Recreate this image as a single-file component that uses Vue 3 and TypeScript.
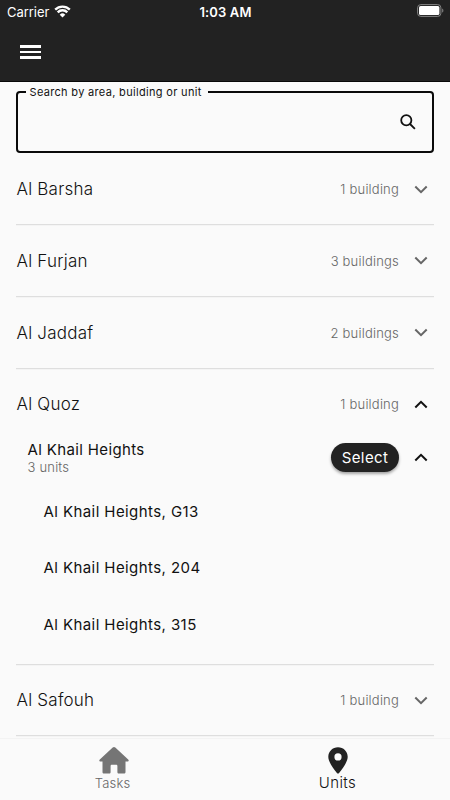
<script setup lang="ts">
interface Building {
  name: string
  summary: string
  units: string[]
}

interface Area {
  name: string
  count: string
  building?: Building
}

const areas: Area[] = [
  { name: 'Al Barsha', count: '1 building' },
  { name: 'Al Furjan', count: '3 buildings' },
  { name: 'Al Jaddaf', count: '2 buildings' },
  {
    name: 'Al Quoz',
    count: '1 building',
    building: {
      name: 'Al Khail Heights',
      summary: '3 units',
      units: ['Al Khail Heights, G13', 'Al Khail Heights, 204', 'Al Khail Heights, 315'],
    },
  },
  { name: 'Al Safouh', count: '1 building' },
]
</script>

<template>
  <div class="screen">
    <header class="top">
      <div class="status">
        <div class="carrier">
          <span>Carrier</span>
          <svg class="wifi" width="17" height="13" viewBox="0 0 17 13">
            <path d="M1.2 4.6a10.4 10.4 0 0 1 14.6 0" />
            <path d="M3.7 7.3a6.8 6.8 0 0 1 9.6 0" />
            <path class="dot" d="M8.5 12.5 5.7 9.7a4 4 0 0 1 5.6 0z" />
          </svg>
        </div>
        <span class="time">1:03 AM</span>
        <svg class="battery" width="27" height="13" viewBox="0 0 27 13">
          <rect class="shell" x=".6" y=".6" width="23.3" height="11.8" rx="3.2" />
          <rect class="charge" x="2" y="2" width="20.4" height="9" rx="1.6" />
          <path class="nub" d="M25.2 4.4c1.6.6 1.6 3.6 0 4.2z" />
        </svg>
      </div>
      <button class="menu" aria-label="Menu"><i></i><i></i><i></i></button>
    </header>

    <main class="content">
      <fieldset class="search">
        <legend>Search by area, building or unit</legend>
        <svg width="16" height="16" viewBox="0 0 16 16">
          <circle cx="6.3" cy="6.3" r="5.1" />
          <path d="M10 10l4.900 4.900" />
        </svg>
      </fieldset>

      <section v-for="area in areas" :key="area.name" class="area">
        <div class="row">
          <span class="area-name">{{ area.name }}</span>
          <span class="count">{{ area.count }}</span>
          <svg class="chevron" :class="{ open: area.building }" width="14" height="9" viewBox="0 0 14 9">
            <path d="M1.3 1.5 7 7.2l5.7-5.7" />
          </svg>
        </div>
        <template v-if="area.building">
          <div class="building">
            <div class="building-text">
              <span class="building-name">{{ area.building.name }}</span>
              <span class="summary">{{ area.building.summary }}</span>
            </div>
            <button class="select">Select</button>
            <svg class="chevron open" width="14" height="9" viewBox="0 0 14 9">
              <path d="M1.3 1.5 7 7.2l5.7-5.7" />
            </svg>
          </div>
          <ul class="units">
            <li v-for="unit in area.building.units" :key="unit">{{ unit }}</li>
          </ul>
        </template>
      </section>
    </main>

    <nav class="tabs">
      <div class="tab">
        <svg width="30" height="27" viewBox="0 0 30 27">
          <path d="M13.7.6a2 2 0 0 1 2.6 0L29.2 12.4c.9.9.5 2-.7 2h-2V25c0 1-.6 1.600-1.600 1.600h-5c-1 0-1.500-.600-1.500-1.600v-5.800c0-.900-.500-1.400-1.400-1.400h-4c-.900 0-1.400.500-1.400 1.400V25c0 1-.500 1.600-1.500 1.600h-5c-1 0-1.600-.600-1.600-1.600V14.400h-2c-1.200 0-1.600-1.100-.700-2z" />
        </svg>
        <span>Tasks</span>
      </div>
      <div class="tab active">
        <svg width="20" height="27" viewBox="0 0 20 27">
          <path fill-rule="evenodd" d="M10 .3c5.4 0 9.7 4.2 9.7 9.5 0 4.6-4.2 10.7-8.6 16.1-.7.8-1.5.8-2.2 0C4.500 20.500.3 14.400.3 9.800.3 4.500 4.600.3 10 .3zm0 6a3.600 3.600 0 1 0 0 7.200 3.600 3.600 0 0 0 0-7.200z" />
        </svg>
        <span>Units</span>
      </div>
    </nav>
  </div>
</template>

<style>
body {
  margin: 0;
  overflow: hidden;
  background: #fafafa;
}
</style>

<style scoped>
.screen {
  display: flex;
  flex-direction: column;
  height: 800px;
  overflow: hidden;
  background: #fafafa;
  color: #111;
  font-family: Inter, 'Liberation Sans', sans-serif;
}
button {
  border: 0;
  padding: 0;
  font: inherit;
}
.top {
  flex: none;
  height: 82px;
  box-sizing: border-box;
  background: #222;
  border-bottom: 1px solid #080808;
  color: #fff;
}
.status {
  display: grid;
  grid-template-columns: 1fr auto 1fr;
  align-items: center;
  height: 23px;
  padding: 0 6px 0 7px;
  font-size: 13px;
}
.carrier {
  display: flex;
  align-items: center;
  gap: 4.5px;
  letter-spacing: -0.05px;
}
.wifi {
  fill: none;
  stroke: #fff;
  stroke-width: 2.4;
  margin-top: -1px;
}
.wifi .dot {
  fill: #fff;
  stroke: none;
}
.time {
  font-weight: 600;
  letter-spacing: 0.12px;
}
.battery {
  justify-self: end;
  margin-top: -2px;
}
.shell {
  fill: none;
  stroke: #858585;
  stroke-width: 1;
}
.charge {
  fill: #fff;
}
.nub {
  fill: #858585;
}
.menu {
  display: flex;
  flex-direction: column;
  gap: 3px;
  width: 21px;
  margin: 22px 0 0 20px;
  background: none;
}
.menu i {
  height: 2.5px;
  background: #fff;
}
.content {
  flex: 1;
  min-height: 0;
  overflow: hidden;
  padding: 3px 16px 0;
}
.search {
  display: flex;
  justify-content: flex-end;
  align-items: center;
  box-sizing: border-box;
  height: 68px;
  min-width: 0;
  margin: 0 0 0.700px;
  padding: 0 16.500px 6px 8px;
  border: 2px solid #0a0a0a;
  border-radius: 4px;
}
.search legend {
  height: 14px;
  padding: 0 6px 0 3.500px;
  font-size: 11px;
  line-height: 14px;
  letter-spacing: 0.32px;
}
.search svg {
  fill: none;
  stroke: #111;
  stroke-width: 1.8;
}
.area {
  border-bottom: 1px solid #dedede;
  box-shadow: 0 0.5px 0 #eee;
}
.row {
  display: flex;
  align-items: center;
  height: 70.8px;
  padding: 0 6px 0 0.5px;
}
.area-name {
  flex: 1;
  font-size: 17px;
  font-weight: 300;
  letter-spacing: 0.22px;
}
.count {
  color: #666;
  font-size: 13px;
  font-weight: 300;
  letter-spacing: 0.2px;
}
.chevron {
  flex: none;
  margin-left: 15px;
  fill: none;
  stroke: #666;
  stroke-width: 2;
}
.chevron.open {
  transform: rotate(180deg);
  stroke: #111;
}
.building {
  display: flex;
  align-items: center;
  height: 36px;
  padding: 0 6px 0 11.500px;
}
.building-text {
  display: flex;
  flex: 1;
  flex-direction: column;
}
.building-name {
  font-size: 15px;
  line-height: 18px;
  letter-spacing: 0.36px;
}
.summary {
  color: #666;
  font-size: 13px;
  font-weight: 300;
  line-height: 16px;
  letter-spacing: 0.2px;
}
.select {
  width: 68px;
  height: 29px;
  border-radius: 15px;
  background: #222;
  box-shadow: 0 2px 3px rgba(0, 0, 0, 0.35);
  color: #fff;
  font-size: 15px;
  letter-spacing: 0.4px;
}
.units {
  margin: 0;
  padding: 8px 0 10px 27.500px;
  list-style: none;
}
.units li {
  height: 56.6px;
  font-size: 15px;
  line-height: 56.6px;
  letter-spacing: 0.42px;
}
.tabs {
  display: grid;
  flex: none;
  grid-template-columns: 1fr 1fr;
  box-sizing: border-box;
  height: 62px;
  padding-top: 8px;
  border-top: 1px solid #f3f3f3;
  background: #fafafa;
}
.tab {
  display: flex;
  flex-direction: column;
  align-items: center;
  color: #666;
  font-size: 13px;
  font-weight: 300;
  line-height: 18px;
  letter-spacing: 0.2px;
}
.tab svg {
  margin-left: 3px;
  fill: #757575;
}
.tab.active {
  color: #111;
  font-size: 15px;
  letter-spacing: 0.4px;
}
.tab.active svg {
  margin-left: 1px;
  fill: #222;
}
</style>
